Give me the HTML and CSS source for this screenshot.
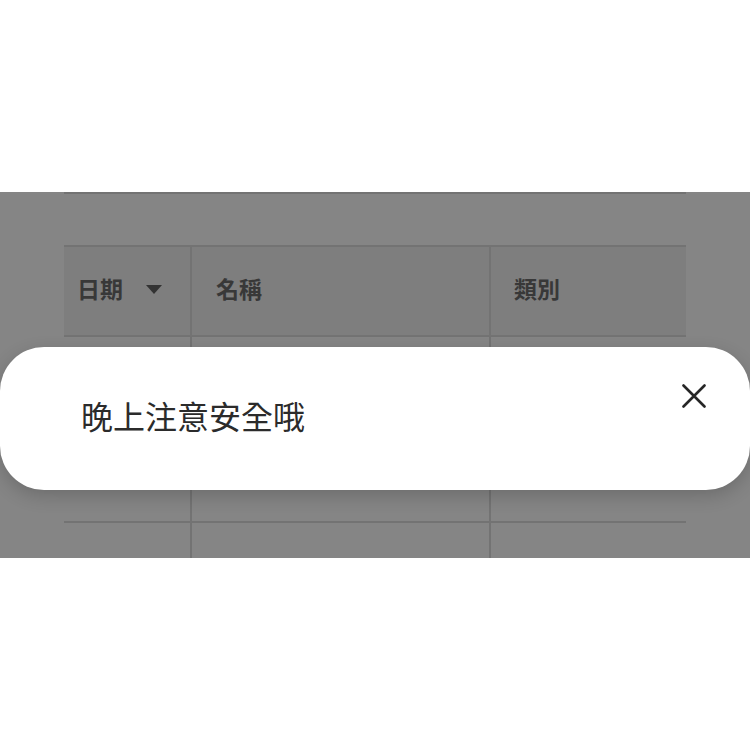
FILE: index.html
```html
<!DOCTYPE html>
<html lang="zh-Hant">
<head>
<meta charset="utf-8">
<link rel="stylesheet" href="styles.css">
</head>
<body>
<div class="page">
  <div class="top-space"></div>
  <div class="stage">
    <div class="table">
      <div class="caption-row"></div>
      <div class="row head">
        <div class="cell c1">日期 <span class="caret"></span></div>
        <div class="cell c2">名稱</div>
        <div class="cell c3">類別</div>
      </div>
      <div class="row body-row">
        <div class="cell c1"></div>
        <div class="cell c2"></div>
        <div class="cell c3"></div>
      </div>
      <div class="row body-row last">
        <div class="cell c1"></div>
        <div class="cell c2"></div>
        <div class="cell c3"></div>
      </div>
    </div>
    <div class="toast">
      <div class="toast-text">晚上注意安全哦</div>
      <button class="close" aria-label="close">
        <svg width="24" height="24" viewBox="0 0 24 24"><path d="M1.5 1.5 L22.5 22.5 M22.5 1.5 L1.5 22.5" stroke="#262626" stroke-width="2.6" stroke-linecap="round" fill="none"/></svg>
      </button>
    </div>
  </div>
</div>
</body>
</html>
```
FILE: styles.css
```css
html, body {
  margin: 0;
  padding: 0;
  background: #ffffff;
}
body {
  font-family: "Noto Sans CJK TC", "Noto Sans CJK SC", "Noto Sans", sans-serif;
}
.page {
  width: 750px;
  height: 750px;
  overflow: hidden;
}
.top-space {
  height: 192px;
}
.stage {
  position: relative;
  height: 366px;
  background: #858585;
  overflow: hidden;
}
.table {
  margin: 0 64px;
}
.caption-row {
  height: 51px;
  border-top: 2px solid #737373;
}
.row {
  display: flex;
}
.head {
  height: 88px;
  background: #7e7e7e;
  border-top: 2px solid #737373;
  border-bottom: 2px solid #737373;
}
.body-row {
  height: 184px;
  border-bottom: 2px solid #737373;
}
.body-row.last {
  height: 60px;
  border-bottom: none;
}
.cell {
  display: flex;
  align-items: center;
  font-size: 23px;
  line-height: 30px;
  font-weight: 700;
  color: #383838;
  box-sizing: border-box;
}
.head .cell {
  padding-bottom: 6px;
}
.c1 {
  width: 128px;
  padding-left: 13px;
  border-right: 2px solid #737373;
}
.c2 {
  width: 299px;
  padding-left: 24px;
  border-right: 2px solid #737373;
}
.c3 {
  flex: 1;
  padding-left: 23px;
}
.caret {
  display: inline-block;
  width: 0;
  height: 0;
  margin-left: 23px;
  margin-top: 2px;
  border-left: 8px solid transparent;
  border-right: 8px solid transparent;
  border-top: 9px solid #333333;
}
.toast {
  position: absolute;
  left: 0;
  top: 155px;
  width: 750px;
  height: 143px;
  box-sizing: border-box;
  background: #ffffff;
  border-radius: 44px;
  box-shadow: 0 6px 18px rgba(0, 0, 0, 0.18);
  display: flex;
  align-items: flex-start;
  justify-content: space-between;
  padding: 0 44px 0 81px;
}
.toast-text {
  margin-top: 48px;
  font-size: 32px;
  line-height: 40px;
  color: #2b2b2b;
  letter-spacing: 0;
}
.close {
  margin-top: 37px;
  width: 24px;
  height: 24px;
  padding: 0;
  border: none;
  background: none;
  display: block;
}
.close svg {
  display: block;
}
```
